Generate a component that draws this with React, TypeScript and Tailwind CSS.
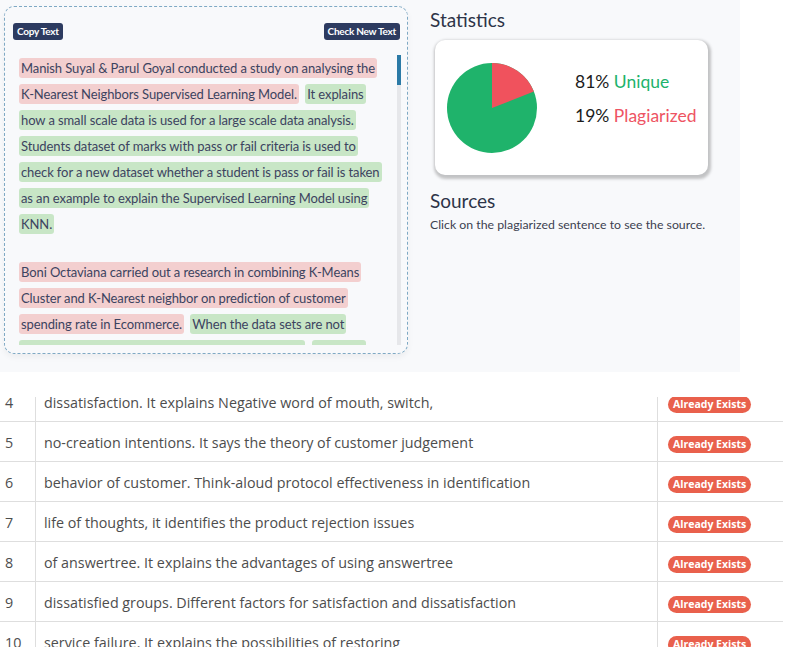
import React from "react";

type Piece = { text: string; kind: "copied" | "unique" };

const paragraphs: Piece[][] = [
  [
    {
      text: "Manish Suyal & Parul Goyal conducted a study on analysing the K-Nearest Neighbors Supervised Learning Model.",
      kind: "copied",
    },
    {
      text: "It explains how a small scale data is used for a large scale data analysis.",
      kind: "unique",
    },
    {
      text: "Students dataset of marks with pass or fail criteria is used to check for a new dataset whether a student is pass or fail is taken as an example to explain the Supervised Learning Model using KNN.",
      kind: "unique",
    },
  ],
  [
    {
      text: "Boni Octaviana carried out a research in combining K-Means Cluster and K-Nearest neighbor on prediction of customer spending rate in Ecommerce.",
      kind: "copied",
    },
    {
      text: "When the data sets are not allocated to valid data, K-Nearest neighbor is used.",
      kind: "unique",
    },
    {
      text: "K-Means Cluster groups the data.",
      kind: "unique",
    },
  ],
];

const rows = [
  { n: 4, text: "dissatisfaction. It explains Negative word of mouth, switch," },
  { n: 5, text: "no-creation intentions. It says the theory of customer judgement" },
  { n: 6, text: "behavior of customer. Think-aloud protocol effectiveness in identification" },
  { n: 7, text: "life of thoughts, it identifies the product rejection issues" },
  { n: 8, text: "of answertree. It explains the advantages of using answertree" },
  { n: 9, text: "dissatisfied groups. Different factors for satisfaction and dissatisfaction" },
  { n: 10, text: "service failure. It explains the possibilities of restoring" },
];

const Pie: React.FC = () => (
  <svg width="90" height="90" viewBox="0 0 90 90">
    <circle cx="45" cy="45" r="45" fill="#1fb36b" />
    <path d="M45 45 L45 0 A45 45 0 0 1 86.84 28.44 Z" fill="#f0525d" />
  </svg>
);

const App: React.FC = () => {
  return (
    <div className="h-[658px] w-[785px] overflow-hidden bg-white">
      {/* checker panel */}
      <div className="flex h-[372px] w-[740px] bg-[#f8f9fb] font-['Lato',sans-serif]">
        <div className="ml-[4px] mt-[6px] flex h-[348px] w-[404px] flex-col rounded-[10px] border border-dashed border-[#7fa9c4] shadow-[0_3px_6px_rgba(0,0,0,0.05)]">
          <div className="flex justify-between pl-[8px] pr-[7px] pt-[16px]">
            <button className="h-[17px] rounded-[3px] bg-[#2d3b60] px-[4px] text-[10px] font-bold leading-[17px] tracking-tight text-white">
              Copy Text
            </button>
            <button className="h-[17px] rounded-[3px] bg-[#2d3b60] px-[4px] text-[10px] font-bold leading-[17px] tracking-tight text-white">
              Check New Text
            </button>
          </div>
          <div className="mt-[15px] flex h-[290px]">
            <div className="h-[290px] w-[385px] overflow-hidden pl-[14px] text-[13px] leading-[26px] tracking-[-0.1px] text-[#3c4360]">
              {paragraphs.map((para, i) => (
                <p key={i} className={i > 0 ? "mt-[22px]" : ""}>
                  {para.map((piece, j) => (
                    <React.Fragment key={j}>
                      <span
                        className={`box-decoration-clone rounded-[3px] px-[2px] py-[2px] ${
                          piece.kind === "copied" ? "bg-[#f3cfcf]" : "bg-[#c8e6c6]"
                        } ${j < para.length - 1 ? "mr-[3px]" : ""}`}
                      >
                        {piece.text}
                      </span>{" "}
                    </React.Fragment>
                  ))}
                </p>
              ))}
            </div>
            <div className="ml-[7px] h-[290px] w-[4px] bg-[#e6e7ea]">
              <div className="h-[30px] w-[4px] bg-[#2b7aa6]" />
            </div>
          </div>
        </div>

        <div className="pl-[22px] pt-[7px]">
          <h2 className="text-[19px] leading-[26px] text-[#2d3448]">Statistics</h2>
          <div className="ml-[5px] mt-[7px] flex h-[135px] w-[273px] items-center rounded-[10px] bg-white pl-[12px] shadow-[1px_2px_3px_2px_rgba(0,0,0,0.22)]">
            <Pie />
            <div className="ml-[38px] -mt-[18px] flex flex-col gap-[10px] text-[17.5px] leading-[24px]">
              <div>
                <span className="text-[#1c1c1c]">81% </span>
                <span className="text-[#20b26b]">Unique</span>
              </div>
              <div>
                <span className="text-[#1c1c1c]">19% </span>
                <span className="text-[#ee5463]">Plagiarized</span>
              </div>
            </div>
          </div>
          <h2 className="mt-[13px] text-[19px] leading-[26px] text-[#2d3448]">Sources</h2>
          <p className="mt-[2px] text-[12.3px] leading-[18px] text-[#3c4150]">
            Click on the plagiarized sentence to see the source.
          </p>
        </div>
      </div>

      {/* sources table, scrolled */}
      <div className="mt-[25px] h-[250px] w-[783px] overflow-hidden font-['Open_Sans',sans-serif]">
        <div className="-mt-[15px]">
          {rows.map((row) => (
            <div
              key={row.n}
              className="grid h-[40px] grid-cols-[35px_622px_1fr] border-b border-[#dedede] text-[14.3px] text-[#4d4d4d]"
            >
              <div className="flex items-center pl-[5px] pt-[2px]">{row.n}</div>
              <div className="flex items-center border-l border-[#dedede] pl-[8px] pt-[2px]">{row.text}</div>
              <div className="flex items-center border-l border-[#dedede] pl-[10px] pt-[6px]">
                <span className="h-[17px] rounded-full bg-[#e9604c] px-[5px] text-[10.5px] font-bold leading-[17px] text-white">
                  Already Exists
                </span>
              </div>
            </div>
          ))}
        </div>
      </div>
    </div>
  );
};

App.displayName = "PlagiarismReport";
export default App;
